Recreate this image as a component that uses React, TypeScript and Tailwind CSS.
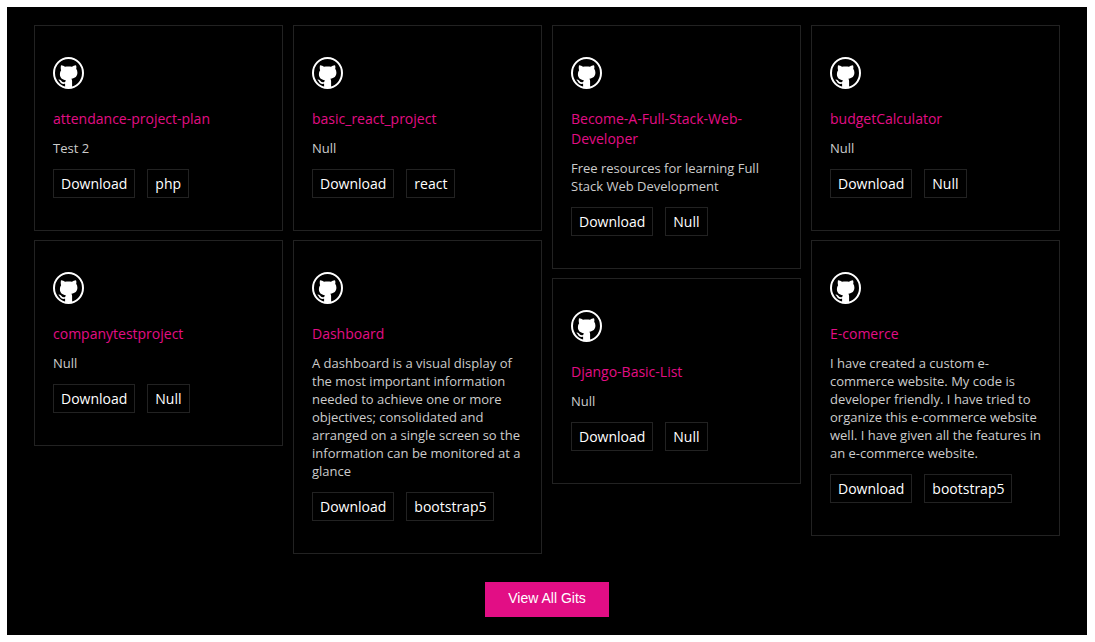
import React from 'react';

type Repo = {
  name: string;
  description: string;
  language: string;
};

// Each inner list is one column of the masonry layout
const columns: Repo[][] = [
  [
    { name: 'attendance-project-plan', description: 'Test 2', language: 'php' },
    { name: 'companytestproject', description: 'Null', language: 'Null' }
  ],
  [
    { name: 'basic_react_project', description: 'Null', language: 'react' },
    {
      name: 'Dashboard',
      description:
        'A dashboard is a visual display of the most important information needed to achieve one or more objectives; consolidated and arranged on a single screen so the information can be monitored at a glance',
      language: 'bootstrap5'
    }
  ],
  [
    {
      name: 'Become-A-Full-Stack-Web-Developer',
      description: 'Free resources for learning Full Stack Web Development',
      language: 'Null'
    },
    { name: 'Django-Basic-List', description: 'Null', language: 'Null' }
  ],
  [
    { name: 'budgetCalculator', description: 'Null', language: 'Null' },
    {
      name: 'E-comerce',
      description:
        'I have created a custom e-commerce website. My code is developer friendly. I have tried to organize this e-commerce website well. I have given all the features in an e-commerce website.',
      language: 'bootstrap5'
    }
  ]
];

function GithubLogo() {
  return (
    <svg viewBox="0 0 31 32" className="block h-8 w-[31px] text-white" fill="none" aria-hidden="true">
      <ellipse cx="15.5" cy="16" rx="14.5" ry="15" stroke="currentColor" strokeWidth="2" />
      <path
        fill="currentColor"
        d="M8 8.200c1.600.1 3 .8 4 1.600 2.200-.5 4.800-.5 7 0 1-.8 2.400-1.500 4-1.600.5 1.300.5 2.500.2 3.500.8 1 1.200 2.300 1.200 3.900 0 4-2.300 5.700-6 6.200.4.500.7 1.200.7 2.200v7h-7v-4.200c-3.300.6-4.300-.8-4.900-1.900-.4-.8-.8-1.300-1.300-1.700-.5-.4-.4-.8.1-.8 1.200 0 1.900.8 2.500 1.600.9 1.300 2.200 1.400 3.700.9.100-.6.400-1.200.7-1.600-3.700-.5-6-2.200-6-6.200 0-1.600.4-2.900 1.200-3.900-.4-1.200-.5-3.100-.1-5Z"
      />
    </svg>
  );
}

function RepoCard({ repo }: { repo: Repo }) {
  return (
    <article className="border border-[#222] px-[18px] pt-[31px] pb-8">
      <GithubLogo />
      <h3 className="mt-5 text-[14px] leading-5 text-[#e20e85]">{repo.name}</h3>
      <p className="mt-[10px] text-[13px] leading-[18px] text-[#ccc]">{repo.description}</p>
      <div className="mt-3 flex gap-3 text-[14px] leading-[27px] font-medium text-white">
        <a href="#download" className="border border-[#222] px-[7px]">Download</a>
        <a href="#language" className="border border-[#222] px-[7px]">{repo.language}</a>
      </div>
    </article>
  );
}

export default function App() {
  return (
    <div className="bg-white p-[7px] pr-2 font-['Open_Sans',sans-serif]">
      <main className="bg-black px-[27px] py-[18px]">
        <div className="grid grid-cols-4 items-start gap-[10px]">
          {columns.map((repos, i) => (
            <div key={i} className="flex min-w-0 flex-col gap-[9px]">
              {repos.map(repo => (
                <RepoCard key={repo.name} repo={repo} />
              ))}
            </div>
          ))}
        </div>

        <div className="mt-7 flex justify-center">
          <button
            type="button"
            className="cursor-pointer bg-[#e20e85] px-[23px] pt-[6px] pb-[9px] font-['Liberation_Sans',sans-serif] text-[14px] leading-5 text-white"
          >
            View All Gits
          </button>
        </div>
      </main>
    </div>
  );
}
